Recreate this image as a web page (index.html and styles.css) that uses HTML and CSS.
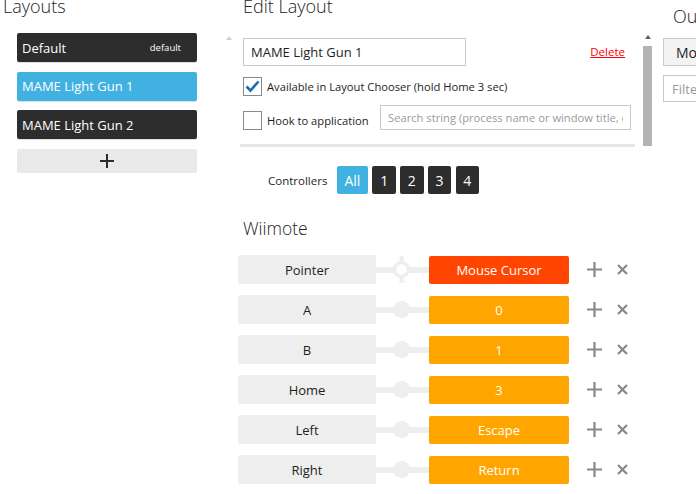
FILE: index.html
```html
<!DOCTYPE html>
<html>
<head>
<meta charset="utf-8">
<link rel="stylesheet" href="styles.css">
</head>
<body>
<div class="app">
  <section class="layouts">
    <h1 class="title">Layouts</h1>
    <div class="layout-wrap">
      <ul class="layout-list">
        <li class="layout-item dark"><span>Default</span><span class="tag">default</span></li>
        <li class="layout-item selected"><span>MAME Light Gun 1</span></li>
        <li class="layout-item dark"><span>MAME Light Gun 2</span></li>
        <li class="add-btn">
          <svg width="14" height="14" viewBox="0 0 14 14"><path d="M7 0V14M0 7H14" stroke="#2d2d2d" stroke-width="2"/></svg>
        </li>
      </ul>
      <div class="mini-scroll"><span class="tri light"></span></div>
    </div>
  </section>

  <section class="editor">
    <h1 class="title">Edit Layout</h1>
    <div class="edit-top">
      <div class="edit-form">
        <div class="name-row">
          <input class="text-input name-input" type="text" value="MAME Light Gun 1">
          <a class="delete" href="#">Delete</a>
        </div>
        <label class="check-row">
          <span class="checkbox checked">
            <svg width="15" height="13" viewBox="0 0 15 13"><path d="M1.5 6.5L5.5 10.5L13.5 1.5" fill="none" stroke="#1c6db3" stroke-width="2.6"/></svg>
          </span>
          <span class="check-label">Available in Layout Chooser (hold Home 3 sec)</span>
        </label>
        <div class="hook-row">
          <label class="check-row inline">
            <span class="checkbox"></span>
            <span class="check-label">Hook to application</span>
          </label>
          <input class="text-input search-input" type="text" placeholder="Search string (process name or window title, e">
        </div>
        <div class="separator"></div>
      </div>
      <div class="scrollbar">
        <span class="tri"></span>
        <span class="thumb"></span>
      </div>
    </div>

    <div class="controllers">
      <span class="ctrl-label">Controllers</span>
      <button class="ctrl-btn all">All</button>
      <button class="ctrl-btn">1</button>
      <button class="ctrl-btn">2</button>
      <button class="ctrl-btn">3</button>
      <button class="ctrl-btn">4</button>
    </div>

    <h2 class="title sub">Wiimote</h2>

    <div class="mappings">
      <div class="map-row">
        <div class="source">Pointer</div>
        <div class="link">
          <svg class="knob-svg" width="17" height="29" viewBox="0 0 17 29"><rect x="6.5" y="1" width="4" height="27" fill="#eeeeee"/><circle cx="8.5" cy="14.5" r="8.5" fill="#eeeeee"/><circle cx="8.5" cy="14.5" r="5.3" fill="#ffffff"/></svg>
        </div>
        <div class="target red">Mouse Cursor</div>
        <span class="icon plus"><svg width="15" height="15" viewBox="0 0 15 15"><path d="M7.5 0V15M0 7.5H15" stroke="#888" stroke-width="2.2"/></svg></span>
        <span class="icon times"><svg width="11" height="11" viewBox="0 0 11 11"><path d="M1 1L10 10M10 1L1 10" stroke="#888" stroke-width="2.2"/></svg></span>
      </div>
      <div class="map-row">
        <div class="source">A</div>
        <div class="link"><span class="knob"></span></div>
        <div class="target">0</div>
        <span class="icon plus"><svg width="15" height="15" viewBox="0 0 15 15"><path d="M7.5 0V15M0 7.5H15" stroke="#888" stroke-width="2.2"/></svg></span>
        <span class="icon times"><svg width="11" height="11" viewBox="0 0 11 11"><path d="M1 1L10 10M10 1L1 10" stroke="#888" stroke-width="2.2"/></svg></span>
      </div>
      <div class="map-row">
        <div class="source">B</div>
        <div class="link"><span class="knob"></span></div>
        <div class="target">1</div>
        <span class="icon plus"><svg width="15" height="15" viewBox="0 0 15 15"><path d="M7.5 0V15M0 7.5H15" stroke="#888" stroke-width="2.2"/></svg></span>
        <span class="icon times"><svg width="11" height="11" viewBox="0 0 11 11"><path d="M1 1L10 10M10 1L1 10" stroke="#888" stroke-width="2.2"/></svg></span>
      </div>
      <div class="map-row">
        <div class="source">Home</div>
        <div class="link"><span class="knob"></span></div>
        <div class="target">3</div>
        <span class="icon plus"><svg width="15" height="15" viewBox="0 0 15 15"><path d="M7.5 0V15M0 7.5H15" stroke="#888" stroke-width="2.2"/></svg></span>
        <span class="icon times"><svg width="11" height="11" viewBox="0 0 11 11"><path d="M1 1L10 10M10 1L1 10" stroke="#888" stroke-width="2.2"/></svg></span>
      </div>
      <div class="map-row">
        <div class="source">Left</div>
        <div class="link"><span class="knob"></span></div>
        <div class="target">Escape</div>
        <span class="icon plus"><svg width="15" height="15" viewBox="0 0 15 15"><path d="M7.5 0V15M0 7.5H15" stroke="#888" stroke-width="2.2"/></svg></span>
        <span class="icon times"><svg width="11" height="11" viewBox="0 0 11 11"><path d="M1 1L10 10M10 1L1 10" stroke="#888" stroke-width="2.2"/></svg></span>
      </div>
      <div class="map-row">
        <div class="source">Right</div>
        <div class="link"><span class="knob"></span></div>
        <div class="target">Return</div>
        <span class="icon plus"><svg width="15" height="15" viewBox="0 0 15 15"><path d="M7.5 0V15M0 7.5H15" stroke="#888" stroke-width="2.2"/></svg></span>
        <span class="icon times"><svg width="11" height="11" viewBox="0 0 11 11"><path d="M1 1L10 10M10 1L1 10" stroke="#888" stroke-width="2.2"/></svg></span>
      </div>
    </div>
  </section>

  <section class="output">
    <h1 class="title out-title">Output</h1>
    <button class="out-btn">Mouse</button>
    <input class="text-input filter-input" type="text" placeholder="Filter">
  </section>
</div>
</body>
</html>
```

FILE: styles.css
```css
* { box-sizing: border-box; margin: 0; padding: 0; }
html, body { width: 696px; height: 494px; overflow: hidden; background: #ffffff; }
body { font-family: "Open Sans", "Noto Sans", sans-serif; color: #1e1e1e; font-size: 13px; }
ul { list-style: none; }
button { font-family: inherit; border: none; cursor: pointer; }
input { font-family: inherit; outline: none; }

.app { display: flex; height: 494px; }

.title {
  font-weight: 300;
  font-size: 18px;
  line-height: 20px;
  margin-top: -4px;
  color: #222222;
  white-space: nowrap;
}

/* Left: layouts */
.layouts { width: 238px; flex: none; }
.layouts .title { padding-left: 3px; }
.layout-wrap { display: flex; margin-top: 17px; padding-left: 17px; }
.layout-list { width: 180px; display: flex; flex-direction: column; gap: 9.6px; }
.layout-item {
  height: 29px;
  border-radius: 2px;
  padding: 0 16px 0 5px;
  display: flex;
  align-items: center;
  justify-content: space-between;
  color: #ffffff;
  font-size: 13px;
  box-shadow: 0 1px 0 rgba(0,0,0,0.12);
}
.layout-item.dark { background: #2d2d2d; }
.layout-item.selected { background: #41b1e1; }
.layout-item .tag { font-size: 9.5px; }
.add-btn {
  height: 24px;
  border-radius: 2px;
  background: #e9e9e9;
  display: flex;
  align-items: center;
  justify-content: center;
}
.mini-scroll { width: 41px; display: flex; justify-content: flex-end; padding: 3px 6px 0 0; }

.tri {
  width: 0; height: 0;
  border-left: 3.5px solid transparent;
  border-right: 3.5px solid transparent;
  border-bottom: 4px solid #606060;
}
.tri.light { border-bottom-color: #d0d0d0; }

/* Middle: editor */
.editor { width: 425px; flex: none; }
.editor > .title { padding-left: 5px; }
.edit-top { display: flex; margin-top: 17px; height: 116px; }
.edit-form { width: 405px; flex: none; padding-top: 5px; }
.name-row { display: flex; align-items: center; justify-content: space-between; padding: 0 18px 0 5px; }
.text-input {
  height: 28px;
  border: 1px solid #c8c8c8;
  background: #ffffff;
  padding: 0 7px;
  font-size: 13px;
  color: #1e1e1e;
}
.text-input::placeholder { color: #9a9a9a; }
.name-input { width: 223px; }
.delete { color: #ff0000; font-size: 11.5px; text-decoration: underline; margin-top: -2px; }

.check-row { display: flex; align-items: center; gap: 5px; padding-left: 5px; margin-top: 11px; }
.check-row.inline { margin-top: 0; }
.checkbox {
  width: 19px; height: 19px;
  border: 1px solid #8a8a8a;
  background: #ffffff;
  display: flex; align-items: center; justify-content: center;
  flex: none;
}
.check-label { font-size: 11.2px; color: #1e1e1e; white-space: nowrap; }
.hook-row { display: flex; align-items: flex-end; justify-content: space-between; margin-top: 9px; padding-right: 12px; }
.search-input { width: 251px; height: 25px; font-size: 11.2px; padding: 0 7px; }
.separator { height: 2.5px; background: #e6e6e6; margin: 14px 8px 0 2px; }

.scrollbar { width: 9px; display: flex; flex-direction: column; align-items: center; padding-top: 2px; }
.scrollbar .thumb { width: 8.5px; height: 100px; background: #b4b4b4; margin-top: 7px; }

.controllers { display: flex; align-items: center; gap: 4.3px; padding-left: 30px; margin-top: 17px; }
.ctrl-label { font-size: 11.5px; margin-right: 5px; }
.ctrl-btn {
  width: 23.4px; height: 28px;
  border-radius: 2px;
  background: #2d2d2d;
  color: #ffffff;
  font-size: 14px;
  display: flex; align-items: center; justify-content: center;
}
.ctrl-btn.all { width: 31.5px; background: #41b1e1; }

.title.sub { font-size: 17.5px; margin-top: 24px; padding-left: 5px; }

.mappings { display: flex; flex-direction: column; gap: 11px; margin-top: 17px; }
.map-row { display: flex; align-items: center; height: 29px; }
.source {
  width: 138px; height: 29px;
  border-radius: 2px;
  background: #eeeeee;
  display: flex; align-items: center; justify-content: center;
  font-size: 13px; color: #1e1e1e;
}
.link {
  width: 53px; height: 6px;
  background: #eeeeee;
  display: flex; align-items: center; justify-content: center;
  padding-right: 2px;
}
.knob { width: 17px; height: 17px; border-radius: 50%; background: #eeeeee; flex: none; }
.knob-svg { flex: none; }
.target {
  width: 140px; height: 28px;
  border-radius: 2px;
  background: #ffa500;
  color: #ffffff;
  display: flex; align-items: center; justify-content: center;
  font-size: 13px;
}
.target.red { background: #ff4500; }
.icon { display: flex; align-items: center; }
.icon.plus { margin-left: 18px; }
.icon.times { margin-left: 15px; }

/* Right: output */
.output { flex: 1; min-width: 0; }
.out-title { padding-left: 10px; margin-top: 6px; }
.out-btn {
  display: block;
  margin-top: 12px;
  width: 120px; height: 28px;
  background: #f3f3f3;
  border: 1px solid #cccccc;
  text-align: left;
  padding-left: 12px;
  font-size: 14px;
  color: #1e1e1e;
}
.filter-input { display: block; margin-top: 9px; width: 120px; height: 27px; padding-left: 8px; font-size: 13px; }
```
